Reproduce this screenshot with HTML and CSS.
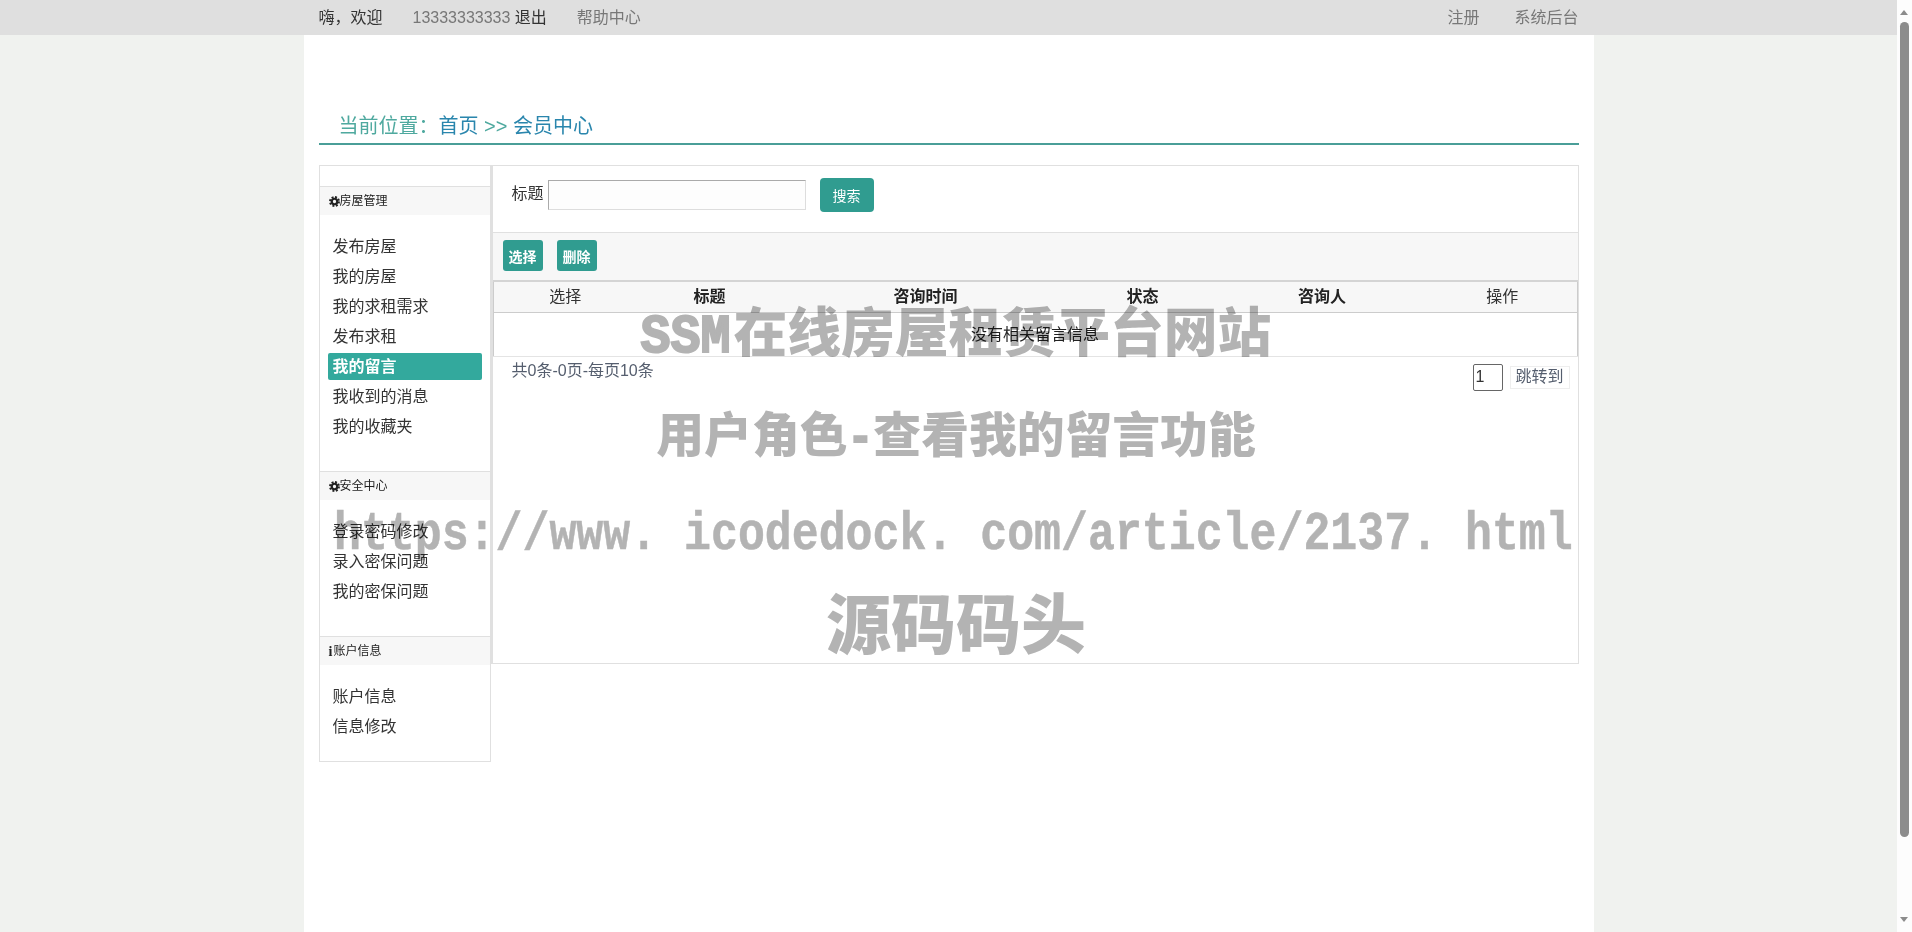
FILE: index.html
```html
<!DOCTYPE html>
<html lang="zh-CN">
<head>
  <meta charset="UTF-8">
  <title>会员中心</title>
  <link rel="stylesheet" href="styles.css">
</head>
<body>

  <div class="topbar">
    <div class="topbar-inner">
      <span class="hello">嗨，欢迎</span>
      <span class="phone">13333333333 <a class="logout">退出</a></span>
      <a class="top-link">帮助中心</a>
      <span class="top-right">
        <a class="top-link">注册</a>
        <a class="top-link">系统后台</a>
      </span>
    </div>
  </div>

  <div class="container">
    <div class="crumb">
      <span class="crumb-label">当前位置：</span><a class="crumb-link">首页</a>
      <span class="crumb-label">&gt;&gt;</span>
      <a class="crumb-link">会员中心</a>
    </div>

    <div class="member">
      <div class="sidebar">
        <div class="side-head">
          <svg class="cog" viewBox="0 0 20 20"><circle cx="10" cy="10" r="5" fill="none" stroke="#222" stroke-width="4"/><circle cx="10" cy="10" r="8.2" fill="none" stroke="#222" stroke-width="3.4" stroke-dasharray="3.6 2.84"/></svg>房屋管理
        </div>
        <ul class="side-list">
          <li><a>发布房屋</a></li>
          <li><a>我的房屋</a></li>
          <li><a>我的求租需求</a></li>
          <li><a>发布求租</a></li>
          <li><a class="active">我的留言</a></li>
          <li><a>我收到的消息</a></li>
          <li><a>我的收藏夹</a></li>
        </ul>

        <div class="side-head">
          <svg class="cog" viewBox="0 0 20 20"><circle cx="10" cy="10" r="5" fill="none" stroke="#222" stroke-width="4"/><circle cx="10" cy="10" r="8.2" fill="none" stroke="#222" stroke-width="3.4" stroke-dasharray="3.6 2.84"/></svg>安全中心
        </div>
        <ul class="side-list">
          <li><a>登录密码修改</a></li>
          <li><a>录入密保问题</a></li>
          <li><a>我的密保问题</a></li>
        </ul>

        <div class="side-head">
          <span class="info">i</span>账户信息
        </div>
        <ul class="side-list last">
          <li><a>账户信息</a></li>
          <li><a>信息修改</a></li>
        </ul>
      </div>

      <div class="main">
        <div class="search">
          <label class="search-label">标题</label>
          <input class="search-input" type="text">
          <button class="btn btn-search">搜索</button>
        </div>

        <div class="tools">
          <button class="btn btn-tool">选择</button>
          <button class="btn btn-tool">删除</button>
        </div>

        <table class="list">
          <colgroup>
            <col class="c1"><col class="c2"><col class="c3"><col class="c4"><col class="c5"><col class="c6">
          </colgroup>
          <thead>
            <tr>
              <th class="plain">选择</th>
              <th>标题</th>
              <th>咨询时间</th>
              <th>状态</th>
              <th>咨询人</th>
              <th class="plain">操作</th>
            </tr>
          </thead>
          <tbody>
            <tr><td colspan="6">没有相关留言信息</td></tr>
          </tbody>
        </table>

        <div class="pager">
          <span class="count">共0条-0页-每页10条</span>
          <span class="jump">
            <input class="jump-input" type="text" value="1">
            <button class="jump-btn">跳转到</button>
          </span>
        </div>
      </div>
    </div>
  </div>

  <div class="watermark">
    <div class="mark mark-1"><span class="narrow wide">SSM</span>在线房屋租赁平台网站</div>
    <div class="mark mark-2">用户角色<span class="narrow">-</span>查看我的留言功能</div>
    <div class="mark mark-3"><span class="url">https://www. icodedock. com/article/2137. html</span></div>
    <div class="mark mark-4">源码码头</div>
  </div>

  <div class="scrollbar">
    <span class="arrow-up"></span>
    <span class="thumb"></span>
    <span class="arrow-down"></span>
  </div>

</body>
</html>
```

FILE: styles.css
```css
html, body { margin: 0; height: 932px; overflow: hidden; }
body { background: #f0f2ef; padding-right: 15px; box-sizing: border-box; font-family: "Liberation Sans", "Noto Sans CJK SC", sans-serif; font-size: 16px; color: #333; position: relative; }
a { color: inherit; text-decoration: none; }
ul { list-style: none; margin: 0; padding: 0; }

.topbar { height: 35px; background: #dfdfdf; }
.topbar-inner { width: 1260px; margin: 0 auto; height: 35px; padding-bottom: 3px; box-sizing: border-box; display: flex; align-items: center; }
.hello { color: #333; margin-right: 30px; }
.phone { color: #777; margin-right: 30px; }
.logout { color: #333; }
.top-link { color: #777; }
.top-right { margin-left: auto; display: flex; gap: 35px; }

.container { width: 1260px; height: 897px; margin: 0 auto; padding: 0 15px; background: #fff; }
.crumb { height: 110px; box-sizing: border-box; padding: 77px 0 0 20px; line-height: 28px; font-size: 20px; border-bottom: 2px solid #4a9e98; margin-bottom: 20px; white-space: nowrap; }
.crumb-label { color: #4fa99f; }
.crumb-link { color: #2a86ad; }

.member { display: flex; align-items: flex-start; }

.sidebar { width: 172px; box-sizing: border-box; border: 1px solid #e0e0e0; padding: 20px 0 20px; }
.side-head { height: 29px; box-sizing: border-box; border-top: 1px solid #e0e0e0; background: #f7f7f7; padding-left: 9px; font-size: 12px; line-height: 27px; color: #222; display: flex; align-items: center; }
.cog { width: 11px; height: 11px; flex: none; }
.info { font-family: "Liberation Serif", serif; font-weight: bold; font-size: 14px; width: 5px; color: #222; }
.side-list { padding: 16px 0 30px; }
.side-list.last { padding-bottom: 0; }
.side-list li { height: 30px; display: flex; align-items: center; padding: 0 8px; }
.side-list a { flex: 1; height: 27px; line-height: 27px; padding-left: 5px; color: #333; border-radius: 2px; }
.side-list a.active { background: #33a99d; color: #fff; font-weight: bold; }

.main { flex: 1; height: 499px; box-sizing: border-box; border: 1px solid #e0e0e0; border-left-width: 2px; }

.search { height: 66px; box-sizing: border-box; padding: 12px 0 0 19px; display: flex; align-items: flex-start; }
.search-label { line-height: 30px; margin-top: 1px; margin-right: 4px; }
.search-input { width: 258px; height: 30px; box-sizing: border-box; margin: 2px 14px 0 0; padding: 0; background: #fdfdfd; border: 1px solid #ddd; border-top-color: #aaa; border-left-color: #aaa; }
.btn { border: none; color: #fff; background: #309c90; font-family: inherit; font-size: 14px; padding: 0; }
.btn-search { width: 54px; height: 34px; border-radius: 4px; }

.tools { height: 48px; box-sizing: border-box; border-top: 1px solid #e0e0e0; background: #f7f7f7; padding: 7px 0 0 10px; display: flex; gap: 14px; align-items: flex-start; }
.btn-tool { width: 40px; height: 31px; border-radius: 3px; font-weight: bold; }

.list { width: 100%; table-layout: fixed; border-collapse: collapse; color: #333; }
.c1 { width: 144px; }
.c2 { width: 145px; }
.c3 { width: 287px; }
.c4 { width: 147px; }
.c5 { width: 212px; }
.list th { height: 31px; padding: 0 0 3px; box-sizing: border-box; background: #f7f7f7; border-top: 2px solid #d4d4d4; border-bottom: 1px solid #ccc; color: #222; font-weight: bold; }
.list th.plain { font-weight: normal; color: #333; }
.list th:first-child { border-left: 1px solid #ccc; }
.list th:last-child { border-right: 1px solid #ccc; }
.list td { height: 44px; padding: 0 0 3px; box-sizing: border-box; text-align: center; color: #222; border-left: 1px solid #ccc; border-right: 1px solid #ccc; border-bottom: 1px solid #e4e4e4; }

.pager { display: flex; justify-content: space-between; align-items: flex-start; padding: 2px 8px 0 19px; }
.count { color: #555e6e; line-height: 24px; }
.jump { display: flex; align-items: flex-start; gap: 7px; padding-top: 5px; }
.jump-input { width: 30px; height: 27px; box-sizing: border-box; padding: 0 0 0 2px; margin: 0; border: 1px solid #666; border-radius: 2px; font-family: inherit; font-size: 16px; color: #333; }
.jump-btn { width: 60px; height: 23px; box-sizing: border-box; margin-top: 2px; padding: 0; background: #fff; border: 1px solid #eee; font-family: inherit; font-size: 16px; line-height: 20px; color: #555e6e; }

/* watermark lies over the whole page, text shows through */
.watermark { position: absolute; left: 0; top: 281px; width: 1912px; display: flex; flex-direction: column; align-items: center; color: #b3b3b3; mix-blend-mode: multiply; font-weight: 900; pointer-events: none; white-space: nowrap; }
.mark { text-align: center; }
.mark-1 { height: 100px; line-height: 104px; font-size: 53.8px; }
.mark-2 { height: 109px; line-height: 109px; font-size: 47.8px; }
.mark-3 { height: 80px; line-height: 80px; font-size: 54px; }
.mark-4 { height: 106px; line-height: 112px; font-size: 65px; }
.narrow { font-family: "Liberation Mono", monospace; font-weight: bold; display: inline-block; transform: scaleX(0.9); margin: 0 -0.03em; -webkit-text-stroke: 2px #b3b3b3; }
.narrow.wide { transform: scaleX(0.93); margin: 0 0 0 -4px; }
.url { font-family: "Liberation Mono", monospace; font-weight: bold; display: inline-block; transform: translateX(-3px) scaleX(0.831); margin: 0 -200px; -webkit-text-stroke: 0.5px #b3b3b3; }

.scrollbar { position: absolute; right: 0; top: 0; width: 15px; height: 932px; background: #fdfdfd; }
.thumb { position: absolute; left: 3px; top: 22px; width: 9px; height: 815px; background: #8c8c8c; border-radius: 5px; }
.arrow-up, .arrow-down { position: absolute; left: 3px; width: 0; height: 0; border-left: 4.5px solid transparent; border-right: 4.5px solid transparent; }
.arrow-up { top: 10px; border-bottom: 5px solid #8c8c8c; }
.arrow-down { top: 917px; border-top: 5px solid #8c8c8c; }
```
